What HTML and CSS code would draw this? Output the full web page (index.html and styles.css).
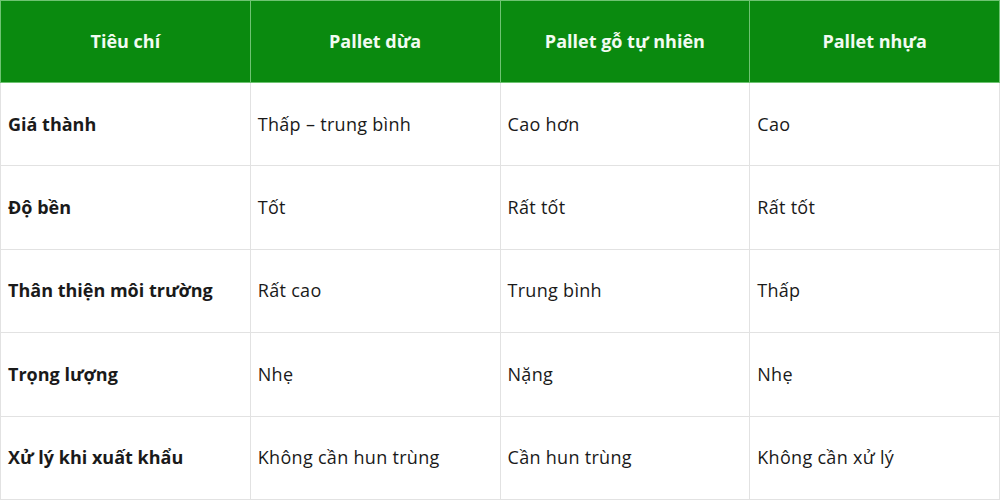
FILE: index.html
```html
<!DOCTYPE html>
<html lang="vi">
<head>
<meta charset="utf-8">
<link rel="stylesheet" href="styles.css">
</head>
<body>
<table class="cmp">
  <thead>
    <tr>
      <th>Tiêu chí</th>
      <th>Pallet dừa</th>
      <th>Pallet gỗ tự nhiên</th>
      <th>Pallet nhựa</th>
    </tr>
  </thead>
  <tbody>
    <tr><td class="k">Giá thành</td><td>Thấp – trung bình</td><td>Cao hơn</td><td>Cao</td></tr>
    <tr><td class="k">Độ bền</td><td>Tốt</td><td>Rất tốt</td><td>Rất tốt</td></tr>
    <tr><td class="k">Thân thiện môi trường</td><td>Rất cao</td><td>Trung bình</td><td>Thấp</td></tr>
    <tr><td class="k">Trọng lượng</td><td>Nhẹ</td><td>Nặng</td><td>Nhẹ</td></tr>
    <tr><td class="k">Xử lý khi xuất khẩu</td><td>Không cần hun trùng</td><td>Cần hun trùng</td><td>Không cần xử lý</td></tr>
  </tbody>
</table>
</body>
</html>
```

FILE: styles.css
```css
html, body {
  margin: 0;
  padding: 0;
  background: #ffffff;
}
body {
  font-family: "Open Sans", "Liberation Sans", sans-serif;
  color: #1a1a1a;
}
.cmp {
  width: 1000px;
  height: 500px;
  border-collapse: collapse;
  table-layout: fixed;
}
.cmp th {
  height: 80px;
  background: #0a8a0f;
  color: #f2fbf2;
  font-size: 18px;
  font-weight: 700;
  text-align: center;
  border: 1px solid #6fc372;
  padding: 0 8px 1px;
}
.cmp td {
  height: 81px;
  border: 1px solid #e2e2e2;
  padding: 0 7px 1px;
  font-size: 18px;
  letter-spacing: 0.3px;
  text-align: left;
}
.cmp td.k {
  font-weight: 700;
  letter-spacing: 0;
}
```
